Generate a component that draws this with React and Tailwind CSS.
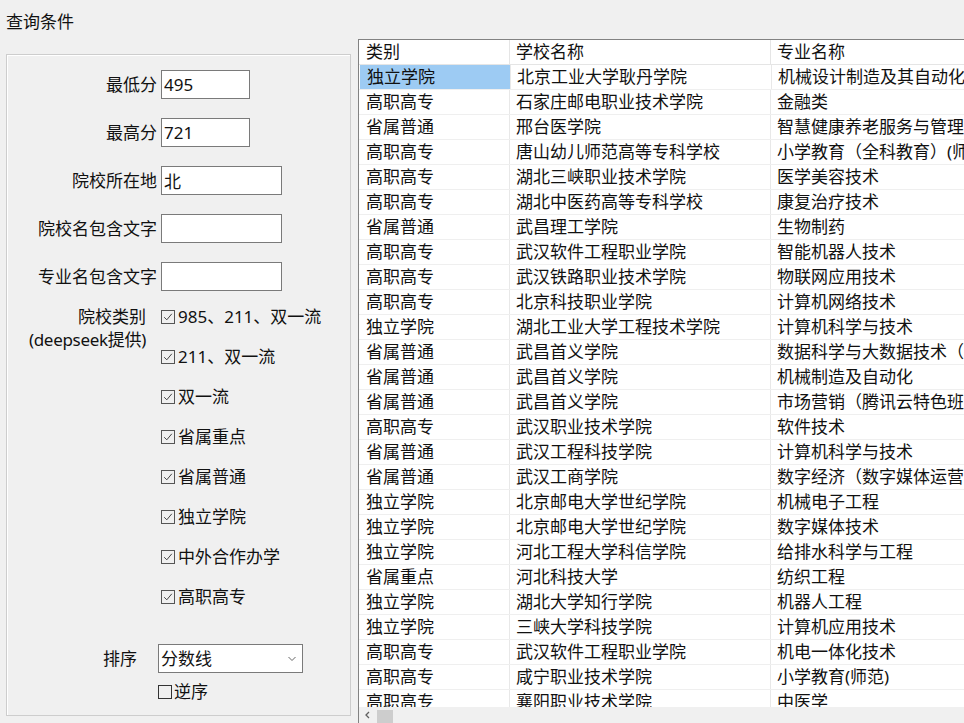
import React from 'react';

const rows = [
  ['独立学院', '北京工业大学耿丹学院', '机械设计制造及其自动化'],
  ['高职高专', '石家庄邮电职业技术学院', '金融类'],
  ['省属普通', '邢台医学院', '智慧健康养老服务与管理'],
  ['高职高专', '唐山幼儿师范高等专科学校', '小学教育（全科教育）(师范)'],
  ['高职高专', '湖北三峡职业技术学院', '医学美容技术'],
  ['高职高专', '湖北中医药高等专科学校', '康复治疗技术'],
  ['省属普通', '武昌理工学院', '生物制药'],
  ['高职高专', '武汉软件工程职业学院', '智能机器人技术'],
  ['高职高专', '武汉铁路职业技术学院', '物联网应用技术'],
  ['高职高专', '北京科技职业学院', '计算机网络技术'],
  ['独立学院', '湖北工业大学工程技术学院', '计算机科学与技术'],
  ['省属普通', '武昌首义学院', '数据科学与大数据技术（大数据）'],
  ['省属普通', '武昌首义学院', '机械制造及自动化'],
  ['省属普通', '武昌首义学院', '市场营销（腾讯云特色班）'],
  ['高职高专', '武汉职业技术学院', '软件技术'],
  ['省属普通', '武汉工程科技学院', '计算机科学与技术'],
  ['省属普通', '武汉工商学院', '数字经济（数字媒体运营）'],
  ['独立学院', '北京邮电大学世纪学院', '机械电子工程'],
  ['独立学院', '北京邮电大学世纪学院', '数字媒体技术'],
  ['独立学院', '河北工程大学科信学院', '给排水科学与工程'],
  ['省属重点', '河北科技大学', '纺织工程'],
  ['独立学院', '湖北大学知行学院', '机器人工程'],
  ['独立学院', '三峡大学科技学院', '计算机应用技术'],
  ['高职高专', '武汉软件工程职业学院', '机电一体化技术'],
  ['高职高专', '咸宁职业技术学院', '小学教育(师范)'],
  ['高职高专', '襄阳职业技术学院', '中医学'],
];

const fields = [
  ['最低分', '495', 'w-[89px]'],
  ['最高分', '721', 'w-[89px]'],
  ['院校所在地', '北', 'w-[121px]'],
  ['院校名包含文字', '', 'w-[121px]'],
  ['专业名包含文字', '', 'w-[121px]'],
];

const kinds = ['985、211、双一流', '211、双一流', '双一流', '省属重点', '省属普通', '独立学院', '中外合作办学', '高职高专'];

function Box({ checked }) {
  return (
    <svg width="14" height="14" viewBox="0 0 14 14" className="shrink-0">
      <rect x="0.5" y="0.5" width="13" height="13" fill="none" stroke={checked ? '#555' : '#333'} strokeWidth="1" />
      {checked && <path d="M3.2 7.2 L5.8 9.8 L10.8 3.8" fill="none" stroke="#444" strokeWidth="1" />}
    </svg>
  );
}

export default function App() {
  return (
    <div className="w-[964px] h-[723px] overflow-hidden flex bg-[#f0f0f0] text-[17px] text-[#111] font-['Noto_Sans','Noto_Sans_CJK_SC',sans-serif]">
      {/* left: query conditions */}
      <div className="w-[358px] shrink-0">
        <div className="h-[54px] px-[6px] pt-[10px] leading-[24px]">查询条件</div>
        <div className="ml-[6px] w-[345px] h-[662px] border border-[#cdcdcd] shadow-[inset_1px_1px_0_#fff] pt-[15px]">
          <div className="flex flex-col gap-[19px]">
            {fields.map(([label, value, w]) => (
              <div key={label} className="flex items-center h-[29px]">
                <div className="w-[150px] text-right leading-[24px] whitespace-nowrap">{label}</div>
                <input
                  readOnly
                  value={value}
                  className={`${w} ml-[4px] h-[29px] border border-[#7a7a7a] bg-white px-[2px] text-[17px] leading-[24px] outline-none`}
                />
              </div>
            ))}
          </div>

          <div className="flex mt-[6px]">
            <div className="w-[150px] pr-[11px] pt-[8px] text-right leading-[23px] whitespace-nowrap">
              <div>院校类别</div>
              <div className="tracking-[-0.3px]">(deepseek提供)</div>
            </div>
            <div className="ml-[4px] flex flex-col">
              {kinds.map((k) => (
                <div key={k} className="h-[40px] flex items-center gap-[3px] leading-[24px] whitespace-nowrap">
                  <Box checked />
                  <span>{k}</span>
                </div>
              ))}
            </div>
          </div>

          <div className="flex items-center mt-[27px]">
            <div className="w-[151px] pr-[21px] text-right leading-[24px]">排序</div>
            <div className="w-[145px] h-[29px] border border-[#7a7a7a] bg-white flex items-center justify-between pl-[2px] pr-[6px]">
              <span className="leading-[24px]">分数线</span>
              <svg width="8" height="6" viewBox="0 0 8 6">
                <path d="M0.5 1 L4 4.5 L7.5 1" fill="none" stroke="#666" strokeWidth="1" />
              </svg>
            </div>
          </div>
          <div className="flex items-center gap-[2px] ml-[151px] mt-[7px] h-[24px] leading-[24px]">
            <Box />
            <span>逆序</span>
          </div>
        </div>
      </div>

      {/* right: results grid */}
      <div className="flex-1 pt-[39px] min-w-0">
        <div className="h-[684px] border-l border-t border-[#828282] bg-white flex flex-col overflow-hidden">
          <div className="flex-1 overflow-hidden">
            <div className="flex h-[25px] border-b border-[#e5e5e5] leading-[24px] whitespace-nowrap">
              <div className="w-[151px] shrink-0 pl-[7px] border-r border-[#e5e5e5]">类别</div>
              <div className="w-[261px] shrink-0 pl-[6px] border-r border-[#e5e5e5]">学校名称</div>
              <div className="w-[320px] shrink-0 pl-[6px]">专业名称</div>
            </div>
            {rows.map((r, i) => (
              <div key={i} className="flex h-[25px] border-b border-[#efefef] leading-[24px] whitespace-nowrap">
                <div className={`w-[151px] shrink-0 pl-[7px] border-r border-[#e8e8e8] ${i === 0 ? 'bg-[#9dcbf3] ml-[1px] w-[150px] pl-[6px]' : ''}`}>{r[0]}</div>
                <div className="w-[261px] shrink-0 pl-[6px] border-r border-[#e8e8e8]">{r[1]}</div>
                <div className="w-[320px] shrink-0 pl-[6px] overflow-hidden">{r[2]}</div>
              </div>
            ))}
          </div>
          <div className="h-[16px] shrink-0 bg-[#f0f0f0] flex items-end">
            <svg width="18" height="16" viewBox="0 0 18 16" className="shrink-0">
              <path d="M10 5 L7 8 L10 11" fill="none" stroke="#606060" strokeWidth="1.3" />
            </svg>
            <div className="w-[16px] h-[13px] bg-[#cdcdcd]"></div>
          </div>
        </div>
      </div>
    </div>
  );
}
